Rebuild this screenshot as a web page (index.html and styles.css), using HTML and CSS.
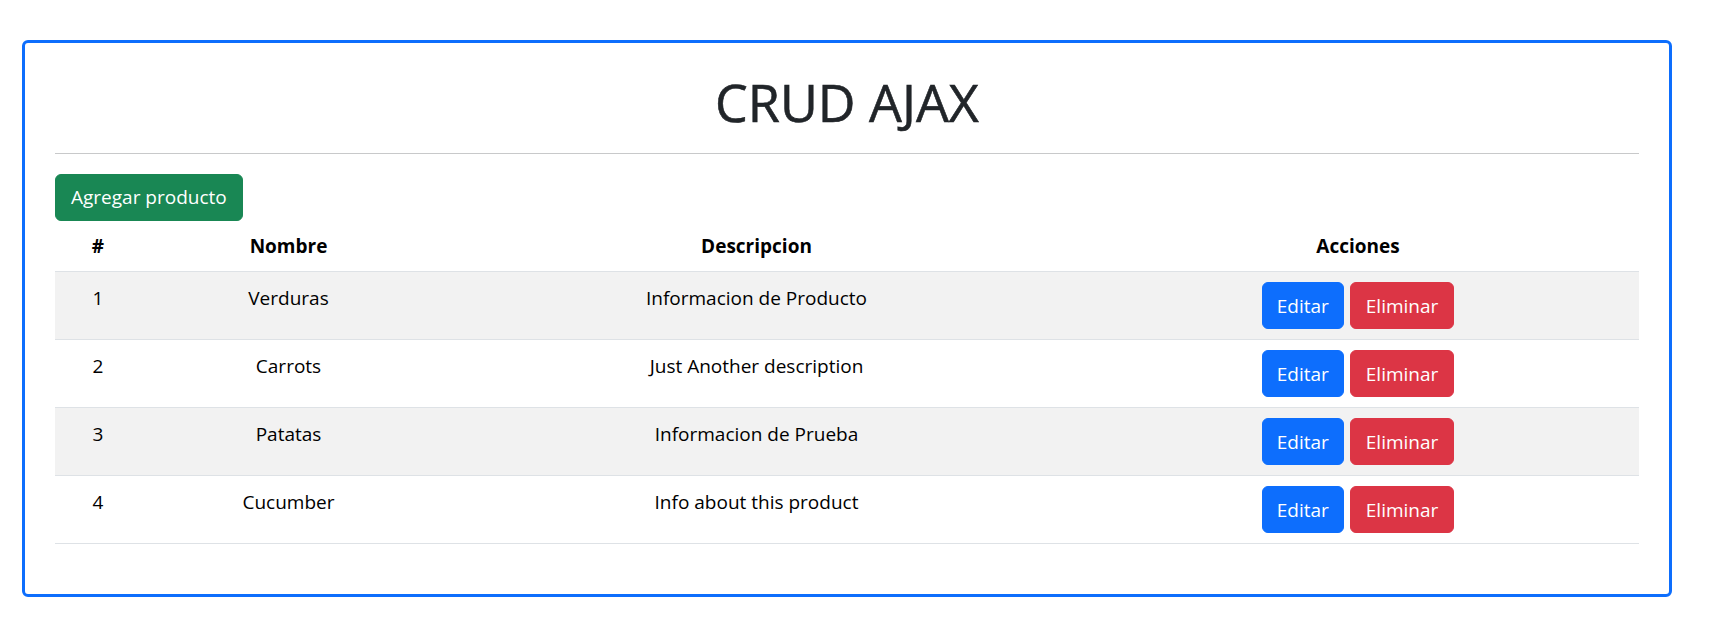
FILE: index.html
```html
<!DOCTYPE html>
<html lang="es">
<head>
<meta charset="utf-8">
<title>CRUD AJAX</title>
<link rel="stylesheet" href="styles.css">
</head>
<body>
<div class="card">
  <h1 class="title">CRUD AJAX</h1>
  <hr class="divider">
  <button class="btn btn-success">Agregar producto</button>
  <table class="table">
    <colgroup>
      <col class="c-id"><col class="c-name"><col class="c-desc"><col class="c-act">
    </colgroup>
    <thead>
      <tr><th>#</th><th>Nombre</th><th>Descripcion</th><th>Acciones</th></tr>
    </thead>
    <tbody>
      <tr class="striped">
        <td>1</td><td>Verduras</td><td>Informacion de Producto</td>
        <td><div class="actions"><button class="btn btn-primary">Editar</button><button class="btn btn-danger">Eliminar</button></div></td>
      </tr>
      <tr>
        <td>2</td><td>Carrots</td><td>Just Another description</td>
        <td><div class="actions"><button class="btn btn-primary">Editar</button><button class="btn btn-danger">Eliminar</button></div></td>
      </tr>
      <tr class="striped">
        <td>3</td><td>Patatas</td><td>Informacion de Prueba</td>
        <td><div class="actions"><button class="btn btn-primary">Editar</button><button class="btn btn-danger">Eliminar</button></div></td>
      </tr>
      <tr>
        <td>4</td><td>Cucumber</td><td>Info about this product</td>
        <td><div class="actions"><button class="btn btn-primary">Editar</button><button class="btn btn-danger">Eliminar</button></div></td>
      </tr>
    </tbody>
  </table>
</div>
</body>
</html>
```
FILE: styles.css
```css
* { box-sizing: border-box; }
html, body { margin: 0; padding: 0; background: #fff; }
body {
  font-family: "Open Sans", "Noto Sans", sans-serif;
  font-size: 19px;
  line-height: 30px;
  color: #212529;
}
.card {
  margin: 40px 0 0 22px;
  width: 1650px;
  border: 3px solid #0d6efd;
  border-radius: 6px;
  padding: 30px;
}
.title {
  margin: 0;
  font-size: 52px;
  line-height: 58px;
  font-weight: 500;
  text-align: center;
  color: #212529;
  -webkit-text-stroke: 0.6px #212529;
}
.divider {
  margin: 22px 0 20px;
  border: 0;
  border-top: 1px solid #c8c9ca;
  height: 0;
}
.btn {
  display: inline-block;
  font-family: inherit;
  font-size: 19px;
  line-height: 30px;
  padding: 7px 15px;
  border: 1px solid transparent;
  border-radius: 6px;
  color: #fff;
  cursor: pointer;
}
.btn-success { background: #198754; border-color: #198754; display: block; line-height: 31px; }
.btn-primary { background: #0d6efd; border-color: #0d6efd; padding: 7.5px 14px; }
.btn-danger { background: #dc3545; border-color: #dc3545; padding: 7.5px 15px; }
.table {
  width: 100%;
  border-collapse: collapse;
  table-layout: fixed;
  margin-bottom: 20px;
  color: #000;
}
.c-id { width: 86px; }
.c-name { width: 295px; }
.c-desc { width: 641px; }
.c-act { width: 562px; }
.table th, .table td {
  padding: 10px;
  line-height: 32px;
  text-align: center;
  vertical-align: top;
  border-bottom: 1px solid #dee2e6;
}
.table th { font-weight: 700; padding-bottom: 9px; line-height: 31px; }
.table tr.striped td { background: #f2f2f2; }
.actions {
  display: flex;
  justify-content: center;
  gap: 6px;
}
```
